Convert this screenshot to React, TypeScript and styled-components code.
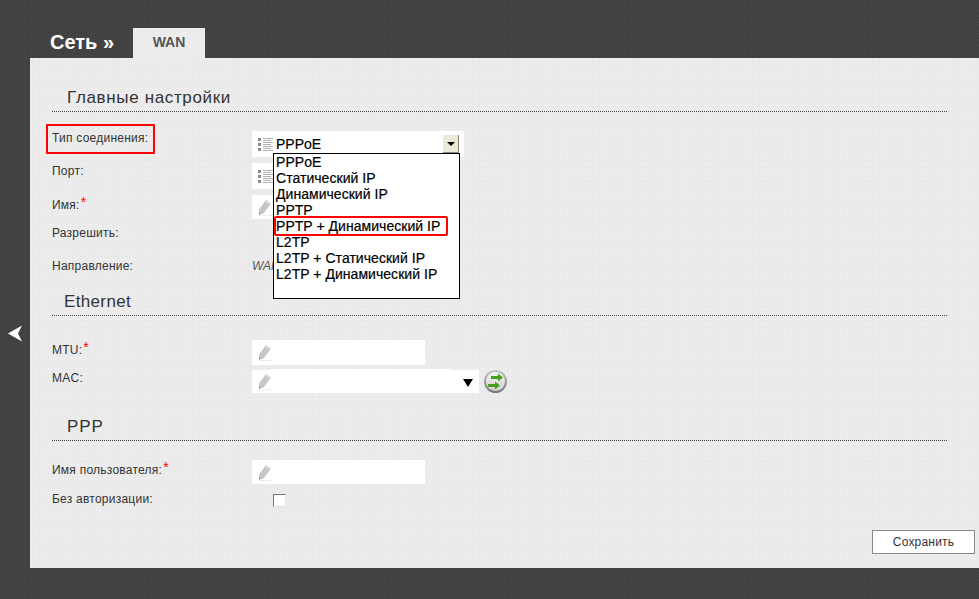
import React from "react";
import styled, { createGlobalStyle } from "styled-components";

const GlobalStyle = createGlobalStyle`
  html, body {
    margin: 0;
    padding: 0;
    background: #404040;
    font-family: "Liberation Sans", Arial, sans-serif;
  }
`;

const Page = styled.div`
  width: 979px;
  height: 599px;
  overflow: hidden;
  display: flex;
  flex-direction: column;
  background-color: #414141;
  background-image:
    radial-gradient(circle at 1px 1px, rgba(255, 255, 255, 0.025) 1px, transparent 1px),
    radial-gradient(circle at 3px 3px, rgba(0, 0, 0, 0.05) 1px, transparent 1px);
  background-size: 3px 3px, 5px 5px;
`;

const Header = styled.div`
  height: 58px;
  padding-left: 50px;
  display: flex;
  align-items: flex-end;
  flex-shrink: 0;
`;

const Title = styled.div`
  width: 83px;
  height: 30px;
  line-height: 28px;
  color: #fff;
  font-size: 20px;
  font-weight: bold;
`;

const Tab = styled.div`
  width: 72px;
  height: 30px;
  line-height: 28px;
  text-align: center;
  background: #ececec;
  color: #555;
  font-size: 14px;
  font-weight: bold;
`;

const Body = styled.div`
  display: flex;
  height: 510px;
`;

const Gutter = styled.div`
  width: 30px;
  flex-shrink: 0;
  display: flex;
  justify-content: center;
  padding-top: 267px;
  box-sizing: border-box;
`;

const Panel = styled.div`
  flex: 1;
  position: relative;
  box-sizing: border-box;
  padding: 27px 32px 0 22px;
  background-color: #ebebeb;
  background-image:
    radial-gradient(circle at 1px 1px, rgba(255, 255, 255, 0.14) 1px, transparent 1px),
    radial-gradient(circle at 2px 4px, rgba(0, 0, 0, 0.012) 1px, transparent 1px);
  background-size: 5px 5px, 7px 7px;
`;

const SectionHead = styled.h2<{ $indent: number; $top?: number; $spacing: number }>`
  margin: ${(p) => p.$top ?? 0}px 0 0;
  height: 26px;
  line-height: 26px;
  padding-left: ${(p) => p.$indent}px;
  border-bottom: 1px dotted #444;
  color: #333;
  font-size: 17px;
  font-weight: normal;
  letter-spacing: ${(p) => p.$spacing}px;
`;

const Row = styled.div<{ $height: number; $top: number }>`
  display: flex;
  align-items: center;
  height: ${(p) => p.$height}px;
  margin-top: ${(p) => p.$top}px;
`;

const Label = styled.label<{ $lift?: number }>`
  position: relative;
  width: 200px;
  flex-shrink: 0;
  margin-bottom: ${(p) => (p.$lift ?? 0) * 2}px;
  color: #333;
  font-size: 12px;
  letter-spacing: 0.24px;
`;

const Required = styled.sup`
  position: absolute;
  margin-left: 1px;
  top: -3px;
  line-height: 1;
  color: #f00;
  font-size: 14px;
`;

const LabelMark = styled.span`
  position: absolute;
  left: -6px;
  top: -7px;
  width: 109px;
  height: 30px;
  box-sizing: border-box;
  border: 2px solid #f00;
  border-radius: 1px;
`;

const Field = styled.div<{ $width: number }>`
  position: relative;
  display: flex;
  align-items: center;
  box-sizing: border-box;
  width: ${(p) => p.$width}px;
  height: 100%;
  padding-left: 6px;
  background: #fff;
`;

const FieldValue = styled.span`
  margin-left: 3px;
  color: #000;
  font-size: 14px;
  -webkit-text-stroke: 0.2px #000;
`;

const ComboArrow = styled.span`
  position: absolute;
  right: 5px;
  top: 4px;
  width: 16px;
  height: 18px;
  box-sizing: border-box;
  display: flex;
  align-items: center;
  justify-content: center;
  background: #ece9d8;
  border-right: 1px solid #8a8878;
  border-bottom: 1px solid #8a8878;
`;

const ArrowGlyph = styled.span`
  width: 0;
  height: 0;
  border-left: 4px solid transparent;
  border-right: 4px solid transparent;
  border-top: 4px solid #000;
`;

const ListBox = styled.ul`
  position: absolute;
  z-index: 2;
  left: 21px;
  top: 22px;
  width: 187px;
  height: 146px;
  margin: 0;
  padding: 0;
  box-sizing: border-box;
  list-style: none;
  background: #fff;
  border: 1px solid #000;
`;

const ListItem = styled.li`
  position: relative;
  height: 16px;
  line-height: 16px;
  padding-left: 2px;
  color: #000;
  font-size: 14px;
  letter-spacing: 0.04px;
  -webkit-text-stroke: 0.2px #000;
  white-space: nowrap;
`;

const ItemMark = styled.span`
  position: absolute;
  left: 0;
  top: -2px;
  width: 174px;
  height: 20px;
  box-sizing: border-box;
  border: 2px solid #f00;
  border-radius: 2px;
`;

const DirectionValue = styled.span`
  color: #555;
  font-size: 12px;
  font-style: italic;
`;

const MacInput = styled.span`
  position: absolute;
  left: 19px;
  top: -1px;
  width: 179px;
  height: 1px;
  background: #fff;
`;

const MacArrow = styled.span`
  position: absolute;
  right: 6px;
  top: 9px;
  width: 0;
  height: 0;
  border-left: 5px solid transparent;
  border-right: 5px solid transparent;
  border-top: 8px solid #000;
`;

const RefreshButton = styled.span`
  margin-left: 5px;
  width: 23px;
  height: 23px;
  display: block;
`;

const CheckMark = styled.span`
  width: 13px;
  height: 13px;
  margin-left: 21px;
  box-sizing: border-box;
  background: #fff;
  border: 1px solid #77776c;
  border-right-color: #e4e2d4;
  border-bottom-color: #e4e2d4;
`;

const SaveButton = styled.button`
  position: absolute;
  right: 4px;
  top: 472px;
  width: 103px;
  height: 24px;
  padding: 0;
  background: #fff;
  border: 1px solid #888;
  color: #333;
  font-family: inherit;
  font-size: 12px;
  letter-spacing: 0.2px;
`;

const PencilIcon = () => (
  <svg width="14" height="17" viewBox="0 0 14 17">
    <path d="M8 1 L13 4.5 L5.5 14.5 L1 15.5 L1 10.5 Z" fill="#c6c6c6" />
    <path d="M8 1 L13 4.5 L11.8 6.1 L6.8 2.6 Z" fill="#dcdcdc" />
    <path d="M1 15.5 L2.8 15.1 L1 13.6 Z" fill="#777" />
    <path d="M1 16.5 H14" stroke="#ececec" strokeWidth="1" />
  </svg>
);

const ListIcon = () => (
  <svg width="15" height="13" viewBox="0 0 15 13">
    {[0, 5, 10].map((y) => (
      <rect key={y} x="0" y={y} width="3" height="3" fill="#8c8c8c" />
    ))}
    {[0, 2, 4, 6, 8, 10, 12].map((y) => (
      <rect key={y} x="5" y={y} width={y % 4 === 0 ? 10 : 8} height="1" fill="#b0b0b0" />
    ))}
  </svg>
);

const SwapIcon = () => (
  <svg width="23" height="23" viewBox="0 0 23 23">
    <defs>
      <linearGradient id="swapRim" x1="0" y1="0" x2="0" y2="1">
        <stop offset="0%" stopColor="#c8c8c8" />
        <stop offset="100%" stopColor="#777" />
      </linearGradient>
      <linearGradient id="swapFace" x1="0" y1="0" x2="0" y2="1">
        <stop offset="0%" stopColor="#f6f6f6" />
        <stop offset="100%" stopColor="#d0d0d0" />
      </linearGradient>
    </defs>
    <circle cx="11.5" cy="11.5" r="11.5" fill="url(#swapRim)" />
    <circle cx="11.5" cy="11.5" r="9.5" fill="url(#swapFace)" />
    <path d="M7 6 H14 V3.5 L19 7.5 L14 11.5 V9 H7 Z" fill="#46a01c" />
    <path d="M4 14 H11 V11.5 L16 15.5 L11 19.5 V17 H4 Z" fill="#46a01c" />
  </svg>
);

const BackArrow = () => (
  <svg width="15" height="17" viewBox="0 0 15 17">
    <path d="M0 8.5 L14 0.5 L10 8.5 L14 16.5 Z" fill="#fff" />
  </svg>
);

const options = [
  "PPPoE",
  "Статический IP",
  "Динамический IP",
  "PPTP",
  "PPTP + Динамический IP",
  "L2TP",
  "L2TP + Статический IP",
  "L2TP + Динамический IP",
];

export default function App() {
  return (
    <Page>
      <GlobalStyle />
      <Header>
        <Title>Сеть »</Title>
        <Tab>WAN</Tab>
      </Header>
      <Body>
        <Gutter>
          <BackArrow />
        </Gutter>
        <Panel>
          <SectionHead $indent={15} $spacing={0.65}>Главные настройки</SectionHead>

          <Row $height={26} $top={19}>
            <Label $lift={6}>
              Тип соединения:
              <LabelMark />
            </Label>
            <Field $width={212}>
              <ListIcon />
              <FieldValue>PPPoE</FieldValue>
              <ComboArrow>
                <ArrowGlyph />
              </ComboArrow>
              <ListBox>
                {options.map((o, i) => (
                  <ListItem key={o}>
                    {o}
                    {i === 4 && <ItemMark />}
                  </ListItem>
                ))}
              </ListBox>
            </Field>
          </Row>
          <Row $height={26} $top={6}>
            <Label $lift={5}>Порт:</Label>
            <Field $width={200}>
              <ListIcon />
            </Field>
          </Row>
          <Row $height={24} $top={6}>
            <Label $lift={2}>
              Имя:<Required>*</Required>
            </Label>
            <Field $width={173}>
              <PencilIcon />
            </Field>
          </Row>
          <Row $height={16} $top={6}>
            <Label>Разрешить:</Label>
          </Row>
          <Row $height={16} $top={17}>
            <Label>Направление:</Label>
            <DirectionValue>WAN</DirectionValue>
          </Row>

          <SectionHead $indent={12} $top={15} $spacing={0.35}>Ethernet</SectionHead>

          <Row $height={25} $top={24}>
            <Label $lift={3}>
              MTU:<Required>*</Required>
            </Label>
            <Field $width={173}>
              <PencilIcon />
            </Field>
          </Row>
          <Row $height={23} $top={5}>
            <Label $lift={4}>MAC:</Label>
            <Field $width={227}>
              <PencilIcon />
              <MacInput />
              <MacArrow />
            </Field>
            <RefreshButton>
              <SwapIcon />
            </RefreshButton>
          </Row>

          <SectionHead $indent={15} $top={21} $spacing={0.9}>PPP</SectionHead>

          <Row $height={24} $top={19}>
            <Label $lift={2}>
              Имя пользователя:<Required>*</Required>
            </Label>
            <Field $width={173}>
              <PencilIcon />
            </Field>
          </Row>
          <Row $height={13} $top={10}>
            <Label $lift={2}>Без авторизации:</Label>
            <CheckMark />
          </Row>

          <SaveButton>Сохранить</SaveButton>
        </Panel>
      </Body>
    </Page>
  );
}
